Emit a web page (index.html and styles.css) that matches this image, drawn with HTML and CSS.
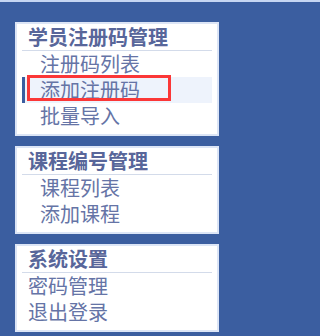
FILE: index.html
```html
<!DOCTYPE html>
<html lang="zh-CN">
<head>
<meta charset="utf-8">
<title>菜单</title>
<link rel="stylesheet" href="styles.css">
</head>
<body>
<div class="topstrip"></div>
<div class="sidebar">
  <div class="panel">
    <div class="panel-title">学员注册码管理</div>
    <ul class="menu">
      <li class="item">注册码列表</li>
      <li class="item active"><span class="mark"></span>添加注册码</li>
      <li class="item">批量导入</li>
    </ul>
  </div>
  <div class="panel">
    <div class="panel-title">课程编号管理</div>
    <ul class="menu">
      <li class="item">课程列表</li>
      <li class="item">添加课程</li>
    </ul>
  </div>
  <div class="panel">
    <div class="panel-title">系统设置</div>
    <ul class="menu flat">
      <li class="item">密码管理</li>
      <li class="item">退出登录</li>
    </ul>
  </div>
</div>
</body>
</html>
```
FILE: styles.css
```css
* { box-sizing: border-box; }
html, body {
  margin: 0;
  padding: 0;
  background: #3b5ea0;
}
body {
  font-family: "Liberation Sans", "Noto Sans CJK SC", sans-serif;
  height: 336px;
  overflow: hidden;
}
.topstrip {
  height: 2px;
  background: #c6d6f2;
}
.sidebar {
  display: flex;
  flex-direction: column;
  gap: 10px;
  padding: 20px 0 0 15px;
}
.panel {
  width: 204px;
  background: #ffffff;
  border: 2px solid #dce5f6;
  padding: 0 5px 5px;
}
.panel-title {
  height: 27px;
  padding-top: 3px;
  line-height: 23px;
  font-size: 20px;
  font-weight: bold;
  color: #58669a;
  padding-left: 6px;
  border-bottom: 1px solid #d3dbea;
  white-space: nowrap;
}
.menu {
  list-style: none;
  margin: 0;
  padding: 0;
}
.item {
  position: relative;
  height: 26px;
  padding-top: 3px;
  line-height: 23px;
  font-size: 20px;
  color: #6574a6;
  padding-left: 18px;
  white-space: nowrap;
}
.menu.flat .item {
  padding-left: 6px;
}
.item.active {
  background: #eef3fc;
  border-left: 3px solid #3b5ea0;
  padding-left: 15px;
}
.mark {
  position: absolute;
  left: 2px;
  top: -2px;
  width: 144px;
  height: 26px;
  border: 3px solid #fb3737;
}
```
